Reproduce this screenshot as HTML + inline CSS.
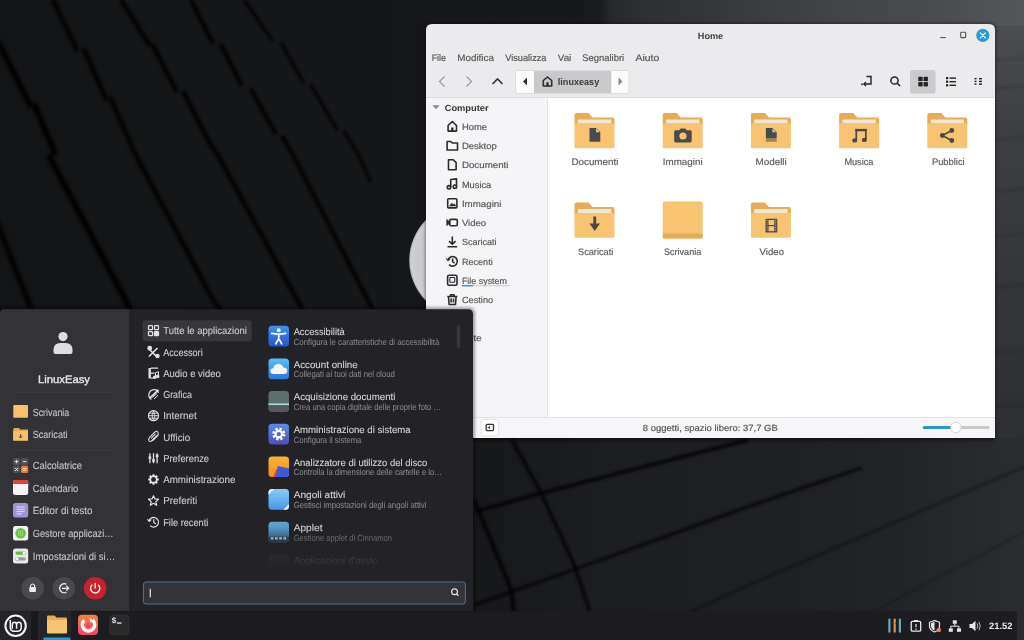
<!DOCTYPE html>
<html><head><meta charset="utf-8"><style>
html,body{margin:0;padding:0;width:1024px;height:640px;overflow:hidden;background:#141416}
svg{display:block;will-change:transform}
text{font-family:"Liberation Sans", sans-serif;text-rendering:geometricPrecision}
</style></head><body>
<svg width="1024" height="640" viewBox="0 0 1024 640">
<defs>
<radialGradient id="bgr" gradientUnits="userSpaceOnUse" cx="1024" cy="0" r="1" gradientTransform="translate(1024 0) scale(460 1000) translate(-1024 0)">
 <stop offset="0" stop-color="#3d3e42"/>
 <stop offset="0.25" stop-color="#36373b"/>
 <stop offset="0.45" stop-color="#303134"/>
 <stop offset="0.6" stop-color="#2a2b2e"/>
 <stop offset="0.73" stop-color="#212225"/>
 <stop offset="0.95" stop-color="#18191b"/>
 <stop offset="1.0" stop-color="#141517" stop-opacity="0"/>
</radialGradient>
<filter id="soft" x="-10%" y="-10%" width="120%" height="120%"><feGaussianBlur stdDeviation="1.8"/></filter>
<linearGradient id="fade" x1="0" y1="0" x2="0" y2="1">
 <stop offset="0" stop-color="#232327" stop-opacity="0"/>
 <stop offset="0.6" stop-color="#232327" stop-opacity="0.8"/>
 <stop offset="1" stop-color="#232327" stop-opacity="1"/>
</linearGradient>
<radialGradient id="disc" cx="0.5" cy="0.5" r="0.5">
 <stop offset="0" stop-color="#d0d1d5"/>
 <stop offset="0.85" stop-color="#c8c9cd"/>
 <stop offset="0.97" stop-color="#cfd0d4"/>
 <stop offset="1" stop-color="#a8a9ad"/>
</radialGradient>
<filter id="shadow2" x="-20%" y="-20%" width="140%" height="140%"><feGaussianBlur stdDeviation="1.5"/></filter>
<filter id="shadow" x="-20%" y="-20%" width="140%" height="140%"><feGaussianBlur stdDeviation="3"/></filter>
</defs>
<defs><linearGradient id="lg0" x1="0" y1="0" x2="1" y2="0"><stop offset="0" stop-color="#131416"/><stop offset="0.6" stop-color="#18191b"/><stop offset="1" stop-color="#1a1b1d"/></linearGradient></defs>
<rect x="0" y="0" width="1024" height="640" fill="url(#lg0)"/>
<rect x="0" y="0" width="1024" height="640" fill="url(#bgr)"/>
<defs><linearGradient id="topg" gradientUnits="userSpaceOnUse" x1="598" y1="0" x2="1024" y2="0"><stop offset="0" stop-color="#1a1a1c"/><stop offset="0.03" stop-color="#27282b"/><stop offset="0.12" stop-color="#2e2f33"/><stop offset="0.34" stop-color="#3a3b3f"/><stop offset="0.55" stop-color="#424347"/><stop offset="0.77" stop-color="#4a4b4f"/><stop offset="1" stop-color="#55565a"/></linearGradient><linearGradient id="rgtg" gradientUnits="userSpaceOnUse" x1="0" y1="0" x2="0" y2="438"><stop offset="0" stop-color="#505156"/><stop offset="0.28" stop-color="#3e3f43"/><stop offset="0.57" stop-color="#37383c"/><stop offset="1" stop-color="#2e2f33"/></linearGradient></defs>
<defs><linearGradient id="botg" gradientUnits="userSpaceOnUse" x1="470" y1="0" x2="1024" y2="0"><stop offset="0" stop-color="#161719"/><stop offset="0.23" stop-color="#1d1e21"/><stop offset="0.6" stop-color="#202124"/><stop offset="0.78" stop-color="#232427"/><stop offset="1" stop-color="#2b2c2f"/></linearGradient></defs>
<rect x="430" y="436" width="594" height="175" fill="url(#botg)"/>
<path d="M604 0 H1024 V30 H590 Z" fill="url(#topg)"/>
<rect x="994" y="26" width="30" height="412" fill="url(#rgtg)"/>
<g fill="none" stroke="#060607" stroke-linecap="butt" filter="url(#soft)"><path d="M53 0 L77.5 51 M83.6 48.5 L106.6 100.5 M110 97 L135.7 155 L213 300 L222 312" stroke-width="4.8" opacity="0.85"/><path d="M-2 42 L31.5 108 M34 104 L55.7 155 M48.5 155 L130.8 310" stroke-width="6" opacity="0.9"/><path d="M-6 215 L31.5 310" stroke-width="6" opacity="0.8"/><path d="M121 0 L150 46 M152.7 44.8 L176.9 92 M183 91 L209.6 143 L217.8 155 L302.7 310" stroke-width="4.8" opacity="0.85"/><path d="M191 0 L213 43.6 M220.3 43.6 L242 86 M250.6 88.4 L276 134.5 M282 135.7 L293 155 L373 310" stroke-width="4.5" opacity="0.85"/><path d="M244.5 0 L272.4 41 M280.8 42.4 L303.9 83.6 M311 84.8 L337.8 130.8 M343.8 130.8 L358.4 155 L370.5 181.7" stroke-width="3.6" opacity="0.8"/><path d="M475.5 511.6 L538.8 493.8 L747.8 440" stroke-width="3.6" opacity="0.85"/><path d="M474 605 L570.4 570.8 L750 506 L862 467.6" stroke-width="3" opacity="0.8"/><path d="M690 612 L750 584.5 L898 521 L1024 467" stroke-width="1.6" opacity="0.55"/><path d="M873 612 L1024 532" stroke-width="1.3" opacity="0.4"/><path d="M511.3 438.7 L540 491 L574.5 565.3 L590 612" stroke-width="3.4" opacity="0.85"/><path d="M474 499.3 L511.3 590 L514 612" stroke-width="4" opacity="0.85"/><path d="M990 61 L1024 58" stroke-width="1.0" opacity="0.3"/><path d="M990 89 L1024 86" stroke-width="1.0" opacity="0.3"/><path d="M990 140 L1024 137" stroke-width="1.0" opacity="0.3"/><path d="M990 192 L1024 189" stroke-width="1.0" opacity="0.3"/><path d="M990 237 L1024 234" stroke-width="1.0" opacity="0.3"/><path d="M990 288 L1024 285" stroke-width="1.0" opacity="0.3"/><path d="M990 353 L1024 350" stroke-width="1.0" opacity="0.3"/><path d="M990 408 L1024 405" stroke-width="1.0" opacity="0.3"/></g>
<circle cx="466.6" cy="260.4" r="57.4" fill="url(#disc)"/>
<rect x="425" y="23" width="571" height="418" rx="6" fill="#000" opacity="0.4" filter="url(#shadow2)"/>
<path d="M426 438 V30 Q426 24 432 24 H989 Q995 24 995 30 V438 Z" fill="#ebebed"/>
<rect x="426" y="97" width="569" height="320" fill="#ffffff"/>
<rect x="426" y="97" width="122" height="320" fill="#f5f5f7"/>
<rect x="547" y="97" width="1" height="320" fill="#e4e4e6"/>
<rect x="426" y="97" width="569" height="1" fill="#dcdcde"/>
<rect x="426" y="417" width="569" height="21" fill="#f6f6f8"/>
<rect x="426" y="417" width="569" height="1" fill="#e2e2e4"/>
<text x="710.5" y="38.9" font-size="9" fill="#3c3c3c" font-weight="bold" text-anchor="middle" textLength="25.4" lengthAdjust="spacingAndGlyphs" >Home</text>
<rect x="940.2" y="37" width="5.6" height="1.1" fill="#555"/>
<rect x="960.7" y="32.3" width="5" height="5.3" fill="none" stroke="#555" stroke-width="1.1" rx="0.6"/>
<circle cx="982.8" cy="35.4" r="6.6" fill="#2a9ad8"/>
<path d="M980.3 32.9 L985.3 37.9 M985.3 32.9 L980.3 37.9" stroke="#e8f6ff" stroke-width="1.3" stroke-linecap="round"/>
<text x="431.7" y="60.7" font-size="9.5" fill="#575757" font-weight="normal" text-anchor="start" textLength="14.3" lengthAdjust="spacingAndGlyphs"  stroke="#575757" stroke-width="0.18">File</text>
<text x="457.3" y="60.7" font-size="9.5" fill="#575757" font-weight="normal" text-anchor="start" textLength="36.6" lengthAdjust="spacingAndGlyphs"  stroke="#575757" stroke-width="0.18">Modifica</text>
<text x="505.3" y="60.7" font-size="9.5" fill="#575757" font-weight="normal" text-anchor="start" textLength="41.1" lengthAdjust="spacingAndGlyphs"  stroke="#575757" stroke-width="0.18">Visualizza</text>
<text x="557.8" y="60.7" font-size="9.5" fill="#575757" font-weight="normal" text-anchor="start" textLength="13.5" lengthAdjust="spacingAndGlyphs"  stroke="#575757" stroke-width="0.18">Vai</text>
<text x="582.2" y="60.7" font-size="9.5" fill="#575757" font-weight="normal" text-anchor="start" textLength="42.0" lengthAdjust="spacingAndGlyphs"  stroke="#575757" stroke-width="0.18">Segnalibri</text>
<text x="635.5" y="60.7" font-size="9.5" fill="#575757" font-weight="normal" text-anchor="start" textLength="23.7" lengthAdjust="spacingAndGlyphs"  stroke="#575757" stroke-width="0.18">Aiuto</text>
<path d="M444.5 76.5 L439.5 81.5 L444.5 86.5" fill="none" stroke="#9a9a9a" stroke-width="1.2"/>
<path d="M466.5 76.5 L471.5 81.5 L466.5 86.5" fill="none" stroke="#9a9a9a" stroke-width="1.2"/>
<path d="M492.5 84 L497.5 79 L502.5 84" fill="none" stroke="#333" stroke-width="1.6"/>
<rect x="515.5" y="70.5" width="113.5" height="23" rx="2" fill="#fbfbfb" stroke="#dcdcde"/>
<rect x="534" y="71" width="77.3" height="22" fill="#c9c9cb"/>
<path d="M527 77.5 L523 81.5 L527 85.5 Z" fill="#2e2e2e"/>
<path d="M618.5 77.5 L622.5 81.5 L618.5 85.5 Z" fill="#8a8a8a"/>
<path d="M543.3 86 V80.5 L547.5 77 L551.7 80.5 V86 Z" fill="none" stroke="#2e2e2e" stroke-width="1.6" stroke-linejoin="round"/><rect x="546.3" y="82.3" width="2.4" height="4" fill="#2e2e2e"/>
<text x="557.8" y="85.2" font-size="9.5" fill="#3a3a3a" font-weight="bold" text-anchor="start" textLength="41.4" lengthAdjust="spacingAndGlyphs" >linuxeasy</text>
<rect x="910" y="70" width="25.6" height="23.6" rx="2.5" fill="#cbcbcd"/>
<rect x="918.3" y="76.8" width="4.3" height="4.3" fill="#222"/>
<rect x="918.3" y="82.1" width="4.3" height="4.3" fill="#222"/>
<rect x="923.5999999999999" y="76.8" width="4.3" height="4.3" fill="#222"/>
<rect x="923.5999999999999" y="82.1" width="4.3" height="4.3" fill="#222"/>
<rect x="946" y="77.0" width="2.2" height="2.2" fill="#222"/>
<rect x="949.5" y="77.4" width="6.5" height="1.4" fill="#222"/>
<rect x="946" y="80.6" width="2.2" height="2.2" fill="#222"/>
<rect x="949.5" y="81.0" width="6.5" height="1.4" fill="#222"/>
<rect x="946" y="84.2" width="2.2" height="2.2" fill="#222"/>
<rect x="949.5" y="84.60000000000001" width="6.5" height="1.4" fill="#222"/>
<rect x="974.5" y="78.0" width="2" height="1.4" fill="#222"/>
<rect x="979" y="78.0" width="3" height="1.4" fill="#222"/>
<rect x="974.5" y="80.7" width="2" height="1.4" fill="#222"/>
<rect x="979" y="80.7" width="3" height="1.4" fill="#222"/>
<rect x="974.5" y="83.4" width="2" height="1.4" fill="#222"/>
<rect x="979" y="83.4" width="3" height="1.4" fill="#222"/>
<circle cx="894.5" cy="80.5" r="3.6" fill="none" stroke="#222" stroke-width="1.5"/>
<path d="M897.2 83.2 L900 86" stroke="#222" stroke-width="1.6"/>
<path d="M866.5 76.5 H871 V84 H864" fill="none" stroke="#222" stroke-width="1.4"/>
<path d="M866 82 L863.8 84 L866 86" fill="none" stroke="#222" stroke-width="1.2"/>
<rect x="861.2" y="83.5" width="1.6" height="1.6" fill="#222"/>
<path d="M432.2 105.3 H439.7 L436 109.3 Z" fill="#8a8a8a"/>
<text x="444.7" y="110.7" font-size="9" fill="#333" font-weight="bold" text-anchor="start" textLength="43.8" lengthAdjust="spacingAndGlyphs" >Computer</text>
<text x="461.9" y="129.9" font-size="9" fill="#585858" font-weight="normal" text-anchor="start" textLength="25.1" lengthAdjust="spacingAndGlyphs"  stroke="#585858" stroke-width="0.18">Home</text>
<g transform="translate(452.3,126.3)" fill="none" stroke="#2b2b2b" stroke-width="1.6" stroke-linejoin="round"><path d="M-4.2 4.8 V-0.8 L0 -4.8 L4.2 -0.8 V4.8 Z"/><rect x="-1.2" y="1.2" width="2.4" height="3.8" fill="#2b2b2b" stroke="none"/></g>
<text x="461.9" y="149.15" font-size="9" fill="#585858" font-weight="normal" text-anchor="start" textLength="35.0" lengthAdjust="spacingAndGlyphs"  stroke="#585858" stroke-width="0.18">Desktop</text>
<g transform="translate(452.3,145.55)" fill="none" stroke="#2b2b2b" stroke-width="1.6" stroke-linejoin="round"><path d="M-5.2 -4 H-1.5 L0 -2.5 H5.2 V4.5 H-5.2 Z"/></g>
<text x="461.9" y="168.4" font-size="9" fill="#585858" font-weight="normal" text-anchor="start" textLength="46.6" lengthAdjust="spacingAndGlyphs"  stroke="#585858" stroke-width="0.18">Documenti</text>
<g transform="translate(452.3,164.8)" fill="none" stroke="#2b2b2b" stroke-width="1.6" stroke-linejoin="round"><path d="M-3.8 -5 H1 L3.8 -2.2 V5 H-3.8 Z"/></g>
<text x="461.9" y="187.65" font-size="9" fill="#585858" font-weight="normal" text-anchor="start" textLength="29.4" lengthAdjust="spacingAndGlyphs"  stroke="#585858" stroke-width="0.18">Musica</text>
<g transform="translate(452.3,184.05)" fill="none" stroke="#2b2b2b" stroke-width="1.6" stroke-linejoin="round"><path d="M-1.6 3.2 V-4.5 L4.2 -5.2 V2.5"/><circle cx="-3.3" cy="3.3" r="1.7"/><circle cx="2.6" cy="2.6" r="1.7"/></g>
<text x="461.9" y="206.9" font-size="9" fill="#585858" font-weight="normal" text-anchor="start" textLength="39.5" lengthAdjust="spacingAndGlyphs"  stroke="#585858" stroke-width="0.18">Immagini</text>
<g transform="translate(452.3,203.3)" fill="none" stroke="#2b2b2b" stroke-width="1.6" stroke-linejoin="round"><rect x="-4.6" y="-4.6" width="9.2" height="9.2" rx="1"/><path d="M-3 3 L-0.5 0 L1 1.5 L2 0.5 L3.5 3" fill="#2b2b2b" stroke-width="0.8"/></g>
<text x="461.9" y="226.15" font-size="9" fill="#585858" font-weight="normal" text-anchor="start" textLength="24.3" lengthAdjust="spacingAndGlyphs"  stroke="#585858" stroke-width="0.18">Video</text>
<g transform="translate(452.3,222.55)" fill="none" stroke="#2b2b2b" stroke-width="1.6" stroke-linejoin="round"><rect x="-2.5" y="-3.2" width="7.5" height="6.4" rx="1.2"/><path d="M-5.5 -3 V3 L-2.5 0.5 V-0.5 Z" fill="#2b2b2b" stroke-width="0.8"/></g>
<text x="461.9" y="245.4" font-size="9" fill="#585858" font-weight="normal" text-anchor="start" textLength="34.6" lengthAdjust="spacingAndGlyphs"  stroke="#585858" stroke-width="0.18">Scaricati</text>
<g transform="translate(452.3,241.8)" fill="none" stroke="#2b2b2b" stroke-width="1.6" stroke-linejoin="round"><path d="M0 -5.2 V2.5 M-3.3 -0.7 L0 2.5 L3.3 -0.7 M-4.8 5 H4.8"/></g>
<text x="461.9" y="264.65" font-size="9" fill="#585858" font-weight="normal" text-anchor="start" textLength="30.8" lengthAdjust="spacingAndGlyphs"  stroke="#585858" stroke-width="0.18">Recenti</text>
<g transform="translate(452.3,261.05)" fill="none" stroke="#2b2b2b" stroke-width="1.6" stroke-linejoin="round"><path d="M-4.4 -1 A4.8 4.8 0 1 1 -3.3 3.6"/><path d="M-6 -2.8 L-4.4 -0.5 L-2.2 -2.3" stroke-width="1.1"/><path d="M0.3 -2.6 V0.6 L2.3 2"/></g>
<text x="461.9" y="283.9" font-size="9" fill="#585858" font-weight="normal" text-anchor="start" textLength="45.1" lengthAdjust="spacingAndGlyphs"  stroke="#585858" stroke-width="0.18">File system</text>
<g transform="translate(452.3,280.3)" fill="none" stroke="#2b2b2b" stroke-width="1.6" stroke-linejoin="round"><rect x="-4.7" y="-5" width="9.4" height="10" rx="1.5"/><rect x="-2.5" y="-2.8" width="5" height="4.8" rx="0.8" stroke-width="1.1"/></g>
<text x="461.9" y="303.15" font-size="9" fill="#585858" font-weight="normal" text-anchor="start" textLength="31.3" lengthAdjust="spacingAndGlyphs"  stroke="#585858" stroke-width="0.18">Cestino</text>
<g transform="translate(452.3,299.55)" fill="none" stroke="#2b2b2b" stroke-width="1.6" stroke-linejoin="round"><path d="M-5 -3 H5 M-1.8 -3 V-4.8 H1.8 V-3 M-3.8 -3 L-3.2 5 H3.2 L3.8 -3 M-1.2 -1 V3 M1.2 -1 V3"/></g>
<text x="473.5" y="341.3" font-size="9" fill="#555555" font-weight="normal" text-anchor="start" textLength="8" lengthAdjust="spacingAndGlyphs"  stroke="#555555" stroke-width="0.18">te</text>
<rect x="461.9" y="285.3" width="48" height="0.9" fill="#c8c8ca"/>
<rect x="461.9" y="285.0" width="11" height="1.4" fill="#2a9ad8"/>
<g transform="translate(574.5,113)"><path d="M0 2 Q0 0 2 0 H14 L18 4.5 H38 Q40 4.5 40 6.5 V12 H0 Z" fill="#e8ac55"/><rect x="3.3" y="6.5" width="33.4" height="4" fill="#f2e7d5"/><path d="M0 10.5 H40 V34 Q40 35.3 38.7 35.3 H1.3 Q0 35.3 0 34 Z" fill="#f8c471"/><path d="M15 15 H21.5 L25.8 19.3 V28.7 H15 Z" fill="#4a4a4a"/><path d="M21.5 15.6 L25.2 19.3 H21.5 Z" fill="#e8e0d0" opacity="0.85"/></g>
<text x="571.4" y="164.7" font-size="9.4" fill="#5e5e5e" font-weight="normal" text-anchor="start" textLength="47.0" lengthAdjust="spacingAndGlyphs"  stroke="#5e5e5e" stroke-width="0.18">Documenti</text>
<g transform="translate(662.7,113)"><path d="M0 2 Q0 0 2 0 H14 L18 4.5 H38 Q40 4.5 40 6.5 V12 H0 Z" fill="#e8ac55"/><rect x="3.3" y="6.5" width="33.4" height="4" fill="#f2e7d5"/><path d="M0 10.5 H40 V34 Q40 35.3 38.7 35.3 H1.3 Q0 35.3 0 34 Z" fill="#f8c471"/><path d="M11.5 18.8 Q11.5 17.3 13 17.3 H16.5 L18 15.5 H22.5 L24 17.3 H27.5 Q29 17.3 29 18.8 V28 Q29 29.4 27.5 29.4 H13 Q11.5 29.4 11.5 28 Z" fill="#4a4a4a"/><circle cx="20.25" cy="23" r="3.6" fill="#f8c471"/></g>
<text x="662.8" y="164.7" font-size="9.4" fill="#5e5e5e" font-weight="normal" text-anchor="start" textLength="39.8" lengthAdjust="spacingAndGlyphs"  stroke="#5e5e5e" stroke-width="0.18">Immagini</text>
<g transform="translate(750.9,113)"><path d="M0 2 Q0 0 2 0 H14 L18 4.5 H38 Q40 4.5 40 6.5 V12 H0 Z" fill="#e8ac55"/><rect x="3.3" y="6.5" width="33.4" height="4" fill="#f2e7d5"/><path d="M0 10.5 H40 V34 Q40 35.3 38.7 35.3 H1.3 Q0 35.3 0 34 Z" fill="#f8c471"/><path d="M15 15 H21.5 L25.8 19.3 V25 H15 Z" fill="#4a4a4a"/><path d="M21.5 15.6 L25.2 19.3 H21.5 Z" fill="#e8e0d0" opacity="0.85"/><rect x="15" y="25" width="10.8" height="3.7" fill="#4a4a4a" opacity="0.55"/></g>
<text x="755.5" y="164.7" font-size="9.4" fill="#5e5e5e" font-weight="normal" text-anchor="start" textLength="31.2" lengthAdjust="spacingAndGlyphs"  stroke="#5e5e5e" stroke-width="0.18">Modelli</text>
<g transform="translate(839.1,113)"><path d="M0 2 Q0 0 2 0 H14 L18 4.5 H38 Q40 4.5 40 6.5 V12 H0 Z" fill="#e8ac55"/><rect x="3.3" y="6.5" width="33.4" height="4" fill="#f2e7d5"/><path d="M0 10.5 H40 V34 Q40 35.3 38.7 35.3 H1.3 Q0 35.3 0 34 Z" fill="#f8c471"/><rect x="16.3" y="15.9" width="11.3" height="2.4" fill="#4a4a4a"/><rect x="16.3" y="15.9" width="1.7" height="11.5" fill="#4a4a4a"/><rect x="25.9" y="15.9" width="1.7" height="11" fill="#4a4a4a"/><ellipse cx="15.6" cy="27.4" rx="2.5" ry="2.2" fill="#4a4a4a"/><ellipse cx="25.2" cy="26.9" rx="2.5" ry="2.2" fill="#4a4a4a"/></g>
<text x="844.4" y="164.7" font-size="9.4" fill="#5e5e5e" font-weight="normal" text-anchor="start" textLength="29.0" lengthAdjust="spacingAndGlyphs"  stroke="#5e5e5e" stroke-width="0.18">Musica</text>
<g transform="translate(927.3,113)"><path d="M0 2 Q0 0 2 0 H14 L18 4.5 H38 Q40 4.5 40 6.5 V12 H0 Z" fill="#e8ac55"/><rect x="3.3" y="6.5" width="33.4" height="4" fill="#f2e7d5"/><path d="M0 10.5 H40 V34 Q40 35.3 38.7 35.3 H1.3 Q0 35.3 0 34 Z" fill="#f8c471"/><circle cx="15" cy="22.5" r="2.4" fill="#4a4a4a"/><circle cx="24.5" cy="17.5" r="2.4" fill="#4a4a4a"/><circle cx="24.5" cy="27.5" r="2.4" fill="#4a4a4a"/><path d="M15 22.5 L24.5 17.5 M15 22.5 L24.5 27.5" stroke="#4a4a4a" stroke-width="1.5"/></g>
<text x="931.9" y="164.7" font-size="9.4" fill="#5e5e5e" font-weight="normal" text-anchor="start" textLength="32.8" lengthAdjust="spacingAndGlyphs"  stroke="#5e5e5e" stroke-width="0.18">Pubblici</text>
<g transform="translate(574.5,202.5)"><path d="M0 2 Q0 0 2 0 H14 L18 4.5 H38 Q40 4.5 40 6.5 V12 H0 Z" fill="#e8ac55"/><rect x="3.3" y="6.5" width="33.4" height="4" fill="#f2e7d5"/><path d="M0 10.5 H40 V34 Q40 35.3 38.7 35.3 H1.3 Q0 35.3 0 34 Z" fill="#f8c471"/><path d="M18.8 14 H21.7 V21 H25.5 L20.25 28.6 L15 21 H18.8 Z" fill="#4a4a4a"/></g>
<text x="578" y="254.7" font-size="9.4" fill="#5e5e5e" font-weight="normal" text-anchor="start" textLength="35.3" lengthAdjust="spacingAndGlyphs"  stroke="#5e5e5e" stroke-width="0.18">Scaricati</text>
<g transform="translate(662.7,201.5)"><rect x="0" y="0" width="40" height="37" rx="1.5" fill="#f8c471"/><rect x="0" y="32" width="40" height="5" rx="1.5" fill="#e8ac55"/></g>
<text x="664" y="254.7" font-size="9.4" fill="#5e5e5e" font-weight="normal" text-anchor="start" textLength="37.2" lengthAdjust="spacingAndGlyphs"  stroke="#5e5e5e" stroke-width="0.18">Scrivania</text>
<g transform="translate(750.9,202.5)"><path d="M0 2 Q0 0 2 0 H14 L18 4.5 H38 Q40 4.5 40 6.5 V12 H0 Z" fill="#e8ac55"/><rect x="3.3" y="6.5" width="33.4" height="4" fill="#f2e7d5"/><path d="M0 10.5 H40 V34 Q40 35.3 38.7 35.3 H1.3 Q0 35.3 0 34 Z" fill="#f8c471"/><rect x="14.6" y="16.2" width="11.8" height="13.8" rx="0.8" fill="#4a4a4a"/><rect x="17.6" y="17.5" width="5.8" height="5" fill="#f8c471"/><rect x="17.6" y="23.7" width="5.8" height="5" fill="#f8c471"/><rect x="15.7" y="17.3" width="1.1" height="1.1" fill="#f8c471" opacity="0.8"/><rect x="15.7" y="19.7" width="1.1" height="1.1" fill="#f8c471" opacity="0.8"/><rect x="15.7" y="22.1" width="1.1" height="1.1" fill="#f8c471" opacity="0.8"/><rect x="15.7" y="24.5" width="1.1" height="1.1" fill="#f8c471" opacity="0.8"/><rect x="15.7" y="26.9" width="1.1" height="1.1" fill="#f8c471" opacity="0.8"/><rect x="24.2" y="17.3" width="1.1" height="1.1" fill="#f8c471" opacity="0.8"/><rect x="24.2" y="19.7" width="1.1" height="1.1" fill="#f8c471" opacity="0.8"/><rect x="24.2" y="22.1" width="1.1" height="1.1" fill="#f8c471" opacity="0.8"/><rect x="24.2" y="24.5" width="1.1" height="1.1" fill="#f8c471" opacity="0.8"/><rect x="24.2" y="26.9" width="1.1" height="1.1" fill="#f8c471" opacity="0.8"/></g>
<text x="759.6" y="254.7" font-size="9.4" fill="#5e5e5e" font-weight="normal" text-anchor="start" textLength="24.4" lengthAdjust="spacingAndGlyphs"  stroke="#5e5e5e" stroke-width="0.18">Video</text>
<rect x="481.2" y="419.5" width="17.4" height="16.4" rx="2.5" fill="#fdfdfd" stroke="#e0e0e2" stroke-width="0.8"/>
<rect x="486.2" y="424.3" width="7.3" height="6.3" rx="1" fill="none" stroke="#333" stroke-width="1.3"/>
<path d="M487.8 427.5 L489.8 425.8 V429.2 Z" fill="#333"/>
<text x="642.8" y="431" font-size="9" fill="#555555" font-weight="normal" text-anchor="start" textLength="135" lengthAdjust="spacingAndGlyphs"  stroke="#555555" stroke-width="0.18">8 oggetti, spazio libero: 37,7 GB</text>
<rect x="922.8" y="426" width="66.6" height="3" rx="1.5" fill="#c8c8ca"/>
<rect x="922.8" y="426" width="33" height="3" rx="1.5" fill="#2a94cf"/>
<circle cx="955.8" cy="427.5" r="5.3" fill="#ffffff" stroke="#c6c6c8" stroke-width="0.8"/>
<rect x="-10" y="307.3" width="485" height="311.7" rx="6" fill="#000" opacity="0.35" filter="url(#shadow2)"/>
<path d="M0 611 V313.3 Q0 309.3 4 309.3 H468 Q473 309.3 473 314.3 V611 Z" fill="#232327"/>
<path d="M0 611 V313.3 Q0 309.3 4 309.3 H129 V611 Z" fill="#323237"/>
<circle cx="63" cy="336.6" r="4.6" fill="#dedede"/>
<path d="M53.5 350 Q53.5 343 60.5 343 H65.5 Q72.5 343 72.5 350 V352 Q72.5 354 70.5 354 H55.5 Q53.5 354 53.5 352 Z" fill="#dedede"/>
<text x="38" y="383.1" font-size="10.8" fill="#e6e6e6" font-weight="normal" text-anchor="start" textLength="51.9" lengthAdjust="spacingAndGlyphs" stroke="#e6e6e6" stroke-width="0.35">LinuxEasy</text>
<rect x="16" y="392.3" width="96" height="0.8" fill="#3e3e44"/>
<rect x="16" y="449.6" width="96" height="0.8" fill="#3e3e44"/>
<rect x="13.3" y="405" width="14.7" height="12.8" rx="1" fill="#f6c06c"/>
<g transform="translate(13.3,428)"><path d="M0 1 Q0 0 1 0 H5.5 L7 1.6 H14.7 V12.6 H0 Z" fill="#e3a954"/><rect x="0" y="3" width="14.7" height="9.6" fill="#f6c06c"/><path d="M7.35 6 V9.5 M5.8 8.3 L7.35 10 L8.9 8.3" stroke="#3a3a3a" stroke-width="0.9" fill="none"/></g>
<text x="32.75" y="415.6" font-size="10.4" fill="#c6c6ca" font-weight="normal" text-anchor="start" textLength="36.5" lengthAdjust="spacingAndGlyphs"  stroke="#c6c6ca" stroke-width="0.1">Scrivania</text>
<text x="32.75" y="438.1" font-size="10.4" fill="#c6c6ca" font-weight="normal" text-anchor="start" textLength="34.7" lengthAdjust="spacingAndGlyphs"  stroke="#c6c6ca" stroke-width="0.1">Scaricati</text>
<text x="32.75" y="468.75" font-size="10.4" fill="#c6c6ca" font-weight="normal" text-anchor="start" textLength="49.2" lengthAdjust="spacingAndGlyphs"  stroke="#c6c6ca" stroke-width="0.1">Calcolatrice</text>
<text x="32.75" y="491.6" font-size="10.4" fill="#c6c6ca" font-weight="normal" text-anchor="start" textLength="45.5" lengthAdjust="spacingAndGlyphs"  stroke="#c6c6ca" stroke-width="0.1">Calendario</text>
<text x="32.75" y="513.75" font-size="10.4" fill="#c6c6ca" font-weight="normal" text-anchor="start" textLength="59.7" lengthAdjust="spacingAndGlyphs"  stroke="#c6c6ca" stroke-width="0.1">Editor di testo</text>
<text x="32.75" y="536.6" font-size="10.4" fill="#c6c6ca" font-weight="normal" text-anchor="start" textLength="80.7" lengthAdjust="spacingAndGlyphs"  stroke="#c6c6ca" stroke-width="0.1">Gestore applicazi…</text>
<text x="32.75" y="559.7" font-size="10.4" fill="#c6c6ca" font-weight="normal" text-anchor="start" textLength="82.5" lengthAdjust="spacingAndGlyphs"  stroke="#c6c6ca" stroke-width="0.1">Impostazioni di si…</text>
<g transform="translate(13,458)"><rect x="0" y="0" width="7.2" height="7.2" rx="1.5" fill="#505055"/><rect x="8" y="0" width="7.2" height="7.2" rx="1.5" fill="#505055"/><rect x="0" y="7.8" width="7.2" height="7.2" rx="1.5" fill="#505055"/><rect x="8" y="7.8" width="7.2" height="7.2" rx="1.5" fill="#ee7a2e"/><path d="M1.8 3.6 H5.4 M3.6 1.8 V5.4 M9.8 3.6 H13.4 M2 9.8 L5.2 13 M5.2 9.8 L2 13 M9.8 10.6 H13.4 M9.8 12.2 H13.4" stroke="#eee" stroke-width="0.9"/></g>
<g transform="translate(13,480)"><rect x="0" y="0" width="15.2" height="15" rx="2.5" fill="#f5f5f5"/><path d="M0 2.5 Q0 0 2.5 0 H12.7 Q15.2 0 15.2 2.5 V4 H0 Z" fill="#e0453a"/></g>
<g transform="translate(13,503)"><rect x="0" y="0" width="15.2" height="14.5" rx="2.5" fill="#9d94d8"/><path d="M3.5 4 H11.7 M3.5 6.3 H11.7 M3.5 8.6 H11.7 M3.5 10.9 H9" stroke="#e8e6f8" stroke-width="0.9"/></g>
<g transform="translate(13,526)"><rect x="0" y="0" width="15.2" height="14.5" rx="2.5" fill="#f2f2f2"/><circle cx="7.6" cy="7.25" r="5.3" fill="#6cbf4a"/><g fill="#d8f0c8"><rect x="5.2" y="4.8" width="0.9" height="0.9"/><rect x="5.2" y="6.699999999999999" width="0.9" height="0.9"/><rect x="5.2" y="8.6" width="0.9" height="0.9"/><rect x="7.1" y="4.8" width="0.9" height="0.9"/><rect x="7.1" y="6.699999999999999" width="0.9" height="0.9"/><rect x="7.1" y="8.6" width="0.9" height="0.9"/><rect x="9.0" y="4.8" width="0.9" height="0.9"/><rect x="9.0" y="6.699999999999999" width="0.9" height="0.9"/><rect x="9.0" y="8.6" width="0.9" height="0.9"/></g></g>
<g transform="translate(13,548.5)"><rect x="0" y="0" width="15.2" height="15" rx="2.5" fill="#e8e8e8"/><rect x="2.5" y="3" width="10.2" height="3.3" rx="1.6" fill="#68b848"/><rect x="2.5" y="8.7" width="10.2" height="3.3" rx="1.6" fill="#9a9a9a"/><circle cx="11" cy="4.65" r="1.3" fill="#fff"/><circle cx="4.2" cy="10.35" r="1.3" fill="#fff"/></g>
<circle cx="32.6" cy="588.3" r="11.3" fill="#48484d"/>
<circle cx="63.8" cy="588.3" r="11.3" fill="#48484d"/>
<circle cx="95.2" cy="588.3" r="11.3" fill="#c8222b"/>
<rect x="29.3" y="587" width="6.6" height="5" rx="0.8" fill="#eee"/><path d="M30.6 587 V585.3 Q32.6 582.6 34.6 585.3 V587" fill="none" stroke="#eee" stroke-width="1.1"/>
<path d="M66.5 584.3 A4.6 4.6 0 1 0 66.5 592.3" fill="none" stroke="#eee" stroke-width="1.3"/><path d="M62 588.3 H68.5 M66.3 586 L68.6 588.3 L66.3 590.6" fill="none" stroke="#eee" stroke-width="1.3"/>
<path d="M92.3 584.8 A4.6 4.6 0 1 0 98.1 584.8" fill="none" stroke="#f5f5f5" stroke-width="1.4"/><path d="M95.2 583 V588.5" stroke="#f5f5f5" stroke-width="1.4"/>
<rect x="142.6" y="320.2" width="109.1" height="21" rx="3" fill="#38383c"/>
<text x="163.2" y="334.3" font-size="10.2" fill="#cdcdd0" font-weight="normal" text-anchor="start" textLength="83.7" lengthAdjust="spacingAndGlyphs"  stroke="#cdcdd0" stroke-width="0.1">Tutte le applicazioni</text>
<g transform="translate(153.5,330.7)" fill="none" stroke="#e2e2e4" stroke-width="1.2" stroke-linejoin="round"><rect x="-5" y="-5" width="4" height="4" rx="0.6"/><rect x="1" y="-5" width="4" height="4" rx="0.6"/><rect x="-5" y="1" width="4" height="4" rx="0.6"/><rect x="1" y="1" width="4" height="4" rx="0.6" fill="#e2e2e4"/></g>
<text x="163.2" y="355.55" font-size="10.2" fill="#cdcdd0" font-weight="normal" text-anchor="start" textLength="39.5" lengthAdjust="spacingAndGlyphs"  stroke="#cdcdd0" stroke-width="0.1">Accessori</text>
<g transform="translate(153.5,351.95)" fill="none" stroke="#e2e2e4" stroke-width="1.2" stroke-linejoin="round"><path d="M-4.5 4.5 L4 -4 M-5 -3.5 L3.5 5 " stroke-width="1.6"/><circle cx="-3.8" cy="-3.8" r="1.8" fill="#e2e2e4"/><circle cx="4" cy="4" r="1.6" fill="#e2e2e4"/></g>
<text x="163.2" y="376.8" font-size="10.2" fill="#cdcdd0" font-weight="normal" text-anchor="start" textLength="57.6" lengthAdjust="spacingAndGlyphs"  stroke="#cdcdd0" stroke-width="0.1">Audio e video</text>
<g transform="translate(153.5,373.2)" fill="none" stroke="#e2e2e4" stroke-width="1.2" stroke-linejoin="round"><rect x="-5" y="-5.2" width="2.4" height="10.4" fill="#e2e2e4" stroke="none"/><path d="M-2.6 -5 H4.5 M-2.6 0 H1 M-2.6 5 H0"/><path d="M2 4 V-0.5 L5 -1.5 V3" stroke-width="1"/><circle cx="1.2" cy="4" r="1.2" fill="#e2e2e4"/><circle cx="4.2" cy="3.2" r="1.2" fill="#e2e2e4"/></g>
<text x="163.2" y="398.05" font-size="10.2" fill="#cdcdd0" font-weight="normal" text-anchor="start" textLength="28.8" lengthAdjust="spacingAndGlyphs"  stroke="#cdcdd0" stroke-width="0.1">Grafica</text>
<g transform="translate(153.5,394.45)" fill="none" stroke="#e2e2e4" stroke-width="1.2" stroke-linejoin="round"><path d="M-2 5 Q-5.5 3 -4.5 -1 Q-3 -5 1.5 -4.8 Q5 -4.3 4.8 -1.5"/><path d="M-4 4 L5 -4.5" stroke-width="1.8"/><path d="M-1 3 L3.5 -1 M0.5 4.5 L4.6 0.8" stroke-width="1"/></g>
<text x="163.2" y="419.3" font-size="10.2" fill="#cdcdd0" font-weight="normal" text-anchor="start" textLength="33.5" lengthAdjust="spacingAndGlyphs"  stroke="#cdcdd0" stroke-width="0.1">Internet</text>
<g transform="translate(153.5,415.7)" fill="none" stroke="#e2e2e4" stroke-width="1.2" stroke-linejoin="round"><circle cx="0" cy="0" r="5"/><path d="M-5 0 H5 M0 -5 Q-3 0 0 5 Q3 0 0 -5 M-4.3 -2.5 H4.3 M-4.3 2.5 H4.3" stroke-width="0.9"/></g>
<text x="163.2" y="440.55" font-size="10.2" fill="#cdcdd0" font-weight="normal" text-anchor="start" textLength="27.0" lengthAdjust="spacingAndGlyphs"  stroke="#cdcdd0" stroke-width="0.1">Ufficio</text>
<g transform="translate(153.5,436.95)" fill="none" stroke="#e2e2e4" stroke-width="1.2" stroke-linejoin="round"><path d="M3.5 -1.5 L-1.5 3.5 Q-3.5 5.5 -4.5 3.8 Q-5.5 2 -3.5 0 L1.5 -5 Q3.5 -6.5 4.5 -4.5 Q5.5 -2.5 3.5 -0.5 L-1 4 M2 -3 L-2.5 1.5" stroke-width="1.1"/></g>
<text x="163.2" y="461.8" font-size="10.2" fill="#cdcdd0" font-weight="normal" text-anchor="start" textLength="45.9" lengthAdjust="spacingAndGlyphs"  stroke="#cdcdd0" stroke-width="0.1">Preferenze</text>
<g transform="translate(153.5,458.2)" fill="none" stroke="#e2e2e4" stroke-width="1.2" stroke-linejoin="round"><path d="M-3.6 -5 V5 M0 -5 V5 M3.6 -5 V5" stroke-width="1.3"/><rect x="-4.9" y="-1.8" width="2.6" height="2.6" fill="#e2e2e4" stroke="none"/><rect x="-1.3" y="1" width="2.6" height="2.6" fill="#e2e2e4" stroke="none"/><rect x="2.3" y="-3.6" width="2.6" height="2.6" fill="#e2e2e4" stroke="none"/></g>
<text x="163.2" y="483.05" font-size="10.2" fill="#cdcdd0" font-weight="normal" text-anchor="start" textLength="72.2" lengthAdjust="spacingAndGlyphs"  stroke="#cdcdd0" stroke-width="0.1">Amministrazione</text>
<g transform="translate(153.5,479.45)" fill="none" stroke="#e2e2e4" stroke-width="1.2" stroke-linejoin="round"><circle cx="0" cy="0" r="3.3" stroke-width="1.8"/><path d="M0 -5.3 V-3.5 M0 3.5 V5.3 M-5.3 0 H-3.5 M3.5 0 H5.3 M-3.75 -3.75 L-2.5 -2.5 M2.5 2.5 L3.75 3.75 M-3.75 3.75 L-2.5 2.5 M2.5 -2.5 L3.75 -3.75" stroke-width="2"/></g>
<text x="163.2" y="504.3" font-size="10.2" fill="#cdcdd0" font-weight="normal" text-anchor="start" textLength="33.9" lengthAdjust="spacingAndGlyphs"  stroke="#cdcdd0" stroke-width="0.1">Preferiti</text>
<g transform="translate(153.5,500.7)" fill="none" stroke="#e2e2e4" stroke-width="1.2" stroke-linejoin="round"><path d="M0 -5 L1.5 -1.7 L5 -1.5 L2.3 0.9 L3.2 4.6 L0 2.6 L-3.2 4.6 L-2.3 0.9 L-5 -1.5 L-1.5 -1.7 Z"/></g>
<text x="163.2" y="525.55" font-size="10.2" fill="#cdcdd0" font-weight="normal" text-anchor="start" textLength="45.2" lengthAdjust="spacingAndGlyphs"  stroke="#cdcdd0" stroke-width="0.1">File recenti</text>
<g transform="translate(153.5,521.95)" fill="none" stroke="#e2e2e4" stroke-width="1.2" stroke-linejoin="round"><path d="M-4.4 -1 A4.8 4.8 0 1 1 -3.3 3.6"/><path d="M-6 -2.8 L-4.4 -0.5 L-2.2 -2.3" stroke-width="1.1"/><path d="M0.3 -2.6 V0.6 L2.3 2"/></g>
<text x="293.7" y="335.0" font-size="9.8" fill="#d4d4d6" font-weight="normal" text-anchor="start" textLength="51.0" lengthAdjust="spacingAndGlyphs"  stroke="#d4d4d6" stroke-width="0.1">Accessibilità</text>
<text x="293.7" y="344.7" font-size="8.8" fill="#88888c" font-weight="normal" text-anchor="start" textLength="145.7" lengthAdjust="spacingAndGlyphs"  stroke="#88888c" stroke-width="0.05">Configura le caratteristiche di accessibilità</text>
<text x="293.7" y="367.65" font-size="9.8" fill="#d4d4d6" font-weight="normal" text-anchor="start" textLength="64.0" lengthAdjust="spacingAndGlyphs"  stroke="#d4d4d6" stroke-width="0.1">Account online</text>
<text x="293.7" y="377.35" font-size="8.8" fill="#88888c" font-weight="normal" text-anchor="start" textLength="101.1" lengthAdjust="spacingAndGlyphs"  stroke="#88888c" stroke-width="0.05">Collegati ai tuoi dati nel cloud</text>
<text x="293.7" y="400.3" font-size="9.8" fill="#d4d4d6" font-weight="normal" text-anchor="start" textLength="101.7" lengthAdjust="spacingAndGlyphs"  stroke="#d4d4d6" stroke-width="0.1">Acquisizione documenti</text>
<text x="293.7" y="410.0" font-size="8.8" fill="#88888c" font-weight="normal" text-anchor="start" textLength="147.5" lengthAdjust="spacingAndGlyphs"  stroke="#88888c" stroke-width="0.05">Crea una copia digitale delle proprie foto …</text>
<text x="293.7" y="432.95" font-size="9.8" fill="#d4d4d6" font-weight="normal" text-anchor="start" textLength="116.9" lengthAdjust="spacingAndGlyphs"  stroke="#d4d4d6" stroke-width="0.1">Amministrazione di sistema</text>
<text x="293.7" y="442.65" font-size="8.8" fill="#88888c" font-weight="normal" text-anchor="start" textLength="67.7" lengthAdjust="spacingAndGlyphs"  stroke="#88888c" stroke-width="0.05">Configura il sistema</text>
<text x="293.7" y="465.6" font-size="9.8" fill="#d4d4d6" font-weight="normal" text-anchor="start" textLength="133.6" lengthAdjust="spacingAndGlyphs"  stroke="#d4d4d6" stroke-width="0.1">Analizzatore di utilizzo del disco</text>
<text x="293.7" y="475.3" font-size="8.8" fill="#88888c" font-weight="normal" text-anchor="start" textLength="148.4" lengthAdjust="spacingAndGlyphs"  stroke="#88888c" stroke-width="0.05">Controlla la dimensione delle cartelle e lo…</text>
<text x="293.7" y="498.25" font-size="9.8" fill="#d4d4d6" font-weight="normal" text-anchor="start" textLength="51.6" lengthAdjust="spacingAndGlyphs"  stroke="#d4d4d6" stroke-width="0.1">Angoli attivi</text>
<text x="293.7" y="507.95" font-size="8.8" fill="#88888c" font-weight="normal" text-anchor="start" textLength="132.7" lengthAdjust="spacingAndGlyphs"  stroke="#88888c" stroke-width="0.05">Gestisci impostazioni degli angoli attivi</text>
<text x="293.7" y="530.9" font-size="9.8" fill="#d4d4d6" font-weight="normal" text-anchor="start" textLength="28.8" lengthAdjust="spacingAndGlyphs"  stroke="#d4d4d6" stroke-width="0.1">Applet</text>
<text x="293.7" y="540.6" font-size="8.8" fill="#88888c" font-weight="normal" text-anchor="start" textLength="98.3" lengthAdjust="spacingAndGlyphs"  stroke="#88888c" stroke-width="0.05">Gestione applet di Cinnamon</text>
<text x="293.7" y="563.55" font-size="9.8" fill="#d4d4d6" font-weight="normal" text-anchor="start" textLength="84.3" lengthAdjust="spacingAndGlyphs"  stroke="#d4d4d6" stroke-width="0.1">Applicazioni d’avvio</text>
<defs><linearGradient id="ic0" x1="0" y1="0" x2="0" y2="1"><stop offset="0" stop-color="#3f93f2"/><stop offset="1" stop-color="#2756cc"/></linearGradient></defs>
<defs><linearGradient id="ic1" x1="0" y1="0" x2="0" y2="1"><stop offset="0" stop-color="#5cc0f4"/><stop offset="1" stop-color="#2a76de"/></linearGradient></defs>
<defs><linearGradient id="ic3" x1="0" y1="0" x2="0" y2="1"><stop offset="0" stop-color="#5b8cea"/><stop offset="1" stop-color="#4d4fb8"/></linearGradient></defs>
<defs><linearGradient id="ic5" x1="0" y1="0" x2="0" y2="1"><stop offset="0" stop-color="#86cdf8"/><stop offset="1" stop-color="#4894e8"/></linearGradient></defs>
<defs><linearGradient id="ic6" x1="0" y1="0" x2="0" y2="1"><stop offset="0" stop-color="#62a6d4"/><stop offset="1" stop-color="#3a74a6"/></linearGradient></defs>
<defs><linearGradient id="ic4" x1="0" y1="0" x2="0" y2="1"><stop offset="0" stop-color="#fbb23a"/><stop offset="1" stop-color="#f3901e"/></linearGradient></defs>
<g transform="translate(268.5,325.8)"><rect width="20.5" height="20.7" rx="3.5" fill="url(#ic0)"/><circle cx="10.25" cy="4.4" r="1.9" fill="#fff"/><path d="M3.3 7.6 Q10.25 9.2 17.2 7.6 M10.25 8.8 V12.5 L7.3 18 M10.25 12.5 L13.2 18" fill="none" stroke="#fff" stroke-width="1.7" stroke-linecap="round" stroke-linejoin="round"/></g>
<g transform="translate(268.5,358.45)"><rect width="20.5" height="20.7" rx="3.5" fill="url(#ic1)"/><path d="M5 15.5 Q1.8 15.5 1.8 12.6 Q1.8 9.8 4.8 9.8 Q5.5 5.5 10 5.5 Q13.8 5.5 14.8 9 Q18.8 9 18.8 12.4 Q18.8 15.5 15.6 15.5 Z" fill="#f4f6f8"/></g>
<g transform="translate(268.5,391.1)"><rect width="20.5" height="20.7" rx="3.5" fill="#5c6e6e"/><rect y="12.3" width="20.5" height="1.8" fill="#a6dcd2"/><path d="M0 14.1 H20.5 V17.2 Q20.5 20.7 17 20.7 H3.5 Q0 20.7 0 17.2 Z" fill="#55585c"/></g>
<g transform="translate(268.5,423.75)"><rect width="20.5" height="20.7" rx="3.5" fill="url(#ic3)"/><circle cx="10.25" cy="10.35" r="5.2" fill="none" stroke="#fff" stroke-width="2.6" stroke-dasharray="2.3 1.8"/><circle cx="10.25" cy="10.35" r="4.3" fill="#fff"/><circle cx="10.25" cy="10.35" r="2.2" fill="#5568c8"/></g>
<g transform="translate(268.5,456.4)"><rect width="20.5" height="20.7" rx="3.5" fill="url(#ic4)"/><path d="M6.5 20.7 L9.5 9.5 L20.5 12 V17.2 Q20.5 20.7 17 20.7 Z" fill="#3d58d8"/><path d="M4.5 20.7 L9.5 9.5 L7.2 20.7 Z" fill="#e8403a"/></g>
<g transform="translate(268.5,489.05)"><rect width="20.5" height="20.7" rx="3.5" fill="url(#ic5)"/><path d="M0 5.5 V3.5 Q0 0 3.5 0 H5.5 Q3 3 0 5.5 Z" fill="#eef6fd"/><path d="M20.5 15.2 V17.2 Q20.5 20.7 17 20.7 H15 Q17.5 17.7 20.5 15.2 Z" fill="#eef6fd"/></g>
<g transform="translate(268.5,521.7)"><rect width="20.5" height="20.7" rx="3.5" fill="url(#ic6)"/><path d="M0 15 H20.5 V17.2 Q20.5 20.7 17 20.7 H3.5 Q0 20.7 0 17.2 Z" fill="#2e4a60"/><rect x="2.3" y="15.6" width="2.8" height="2.2" fill="#eef2f6"/><rect x="6.5" y="15.6" width="2.8" height="2.2" fill="#eef2f6"/><rect x="10.7" y="15.6" width="2.8" height="2.2" fill="#eef2f6"/><rect x="14.900000000000002" y="15.6" width="2.8" height="2.2" fill="#eef2f6"/></g>
<g transform="translate(268.5,554.35)"><rect width="20.5" height="20.7" rx="3.5" fill="#3a4a52"/></g>
<rect x="262" y="528" width="195" height="42" fill="url(#fade)"/><rect x="262" y="570" width="195" height="8" fill="#232327"/>
<rect x="456.8" y="325.3" width="3.2" height="22.5" rx="1.6" fill="#36363b"/>
<rect x="143.4" y="582" width="322" height="22" rx="2.5" fill="#333338" stroke="#3f7b9e" stroke-width="1"/>
<rect x="149.7" y="588.8" width="1.2" height="8.5" fill="#e8e8e8"/>
<circle cx="454.5" cy="591.8" r="2.9" fill="none" stroke="#e0e0e0" stroke-width="1.2"/><path d="M456.6 593.9 L458.5 595.8" stroke="#e0e0e0" stroke-width="1.3"/>
<rect x="0" y="611.3" width="1017" height="28.7" fill="#1d1d21"/>
<rect x="1017" y="611.3" width="7" height="28.7" fill="#2b2b2f"/>
<rect x="0" y="611.3" width="31" height="28.7" fill="#242428"/>
<rect x="31" y="611.3" width="7" height="28.7" fill="#19191c"/>
<rect x="38" y="611.3" width="33" height="28.7" fill="#25252a"/>
<rect x="43.4" y="637.5" width="27" height="2.5" fill="#2a9ad8"/>
<circle cx="15.6" cy="625.8" r="10.2" fill="none" stroke="#f4f4f4" stroke-width="2"/>
<path d="M10.3 620 V627.5 Q10.3 631.2 14 631.2 H17.5 Q21.2 631.2 21.2 627.5 V625 Q21.2 622.3 18.9 622.3 Q16.6 622.3 16.6 625 V628.8 M16.6 625 Q16.6 622.3 14.3 622.3 Q12.3 622.3 12.3 625 V628.8" fill="none" stroke="#f4f4f4" stroke-width="1.5"/>
<g transform="translate(47,615.5)"><path d="M0 1.2 Q0 0 1.2 0 H7.5 L9.5 2 H18.8 Q20 2 20 3.2 V6 H0 Z" fill="#e8ac55"/><rect x="0" y="4.5" width="20" height="13.6" rx="1" fill="#f8c471"/></g>
<defs><linearGradient id="ffg" x1="0" y1="0" x2="0" y2="1"><stop offset="0" stop-color="#f7833a"/><stop offset="1" stop-color="#f04468"/></linearGradient></defs>
<g transform="translate(78,614.8)"><rect width="20" height="20.2" rx="4" fill="url(#ffg)"/><path d="M6.2 5.5 A6.2 6.2 0 1 0 14.5 5.2" fill="none" stroke="#fff" stroke-width="3.4"/><path d="M11.2 3.2 Q14.5 3.8 15.6 7 L12.5 7.5 Z" fill="#fff"/><circle cx="10.3" cy="10.8" r="2.4" fill="#ee4a55"/></g>
<g transform="translate(109.7,615.1)"><rect width="19.3" height="19.9" rx="3.5" fill="#2a2a2b" stroke="#3c3c3e" stroke-width="0.5"/><text x="2.0" y="8.2" font-size="8" font-weight="bold" fill="#e8e8e8" font-family="Liberation Mono">$</text><rect x="7.2" y="7.3" width="4.6" height="1.3" fill="#e8e8e8"/></g>
<rect x="888.3" y="618.5" width="2.2" height="14.3" rx="1.1" fill="#6aa8b8"/>
<rect x="893.6" y="618.5" width="2.2" height="14.3" rx="1.1" fill="#df9148"/>
<rect x="898.8" y="618.5" width="2.2" height="14.3" rx="1.1" fill="#6aa8b8"/>
<rect x="895.5" y="623" width="1" height="1" fill="#1d1d21"/>
<rect x="911.2" y="621.3" width="9.5" height="9.8" rx="1.2" fill="none" stroke="#e8e8e8" stroke-width="1.3"/><rect x="914" y="620" width="4" height="2" fill="#e8e8e8"/><path d="M916 624 V627.3 M916 628.6 V629.7" stroke="#e8e8e8" stroke-width="1.2"/>
<path d="M934.5 620.5 L929.5 622.3 V626 Q929.5 630 934.5 632 Q939.5 630 939.5 626 V622.3 Z" fill="none" stroke="#e8e8e8" stroke-width="1.2"/><path d="M934.5 621.8 V630.5 Q931 629 931 626 V623.2 Z" fill="#e8e8e8"/><circle cx="938.8" cy="630" r="2.2" fill="#e8805a"/>
<rect x="952.8" y="620.3" width="4" height="3.5" fill="#e8e8e8"/><rect x="948.8" y="628.3" width="4" height="3.5" fill="#e8e8e8"/><rect x="957" y="628.3" width="4" height="3.5" fill="#e8e8e8"/><path d="M954.8 623.8 V626.2 M950.8 628.3 V626.2 H959 V628.3" fill="none" stroke="#e8e8e8" stroke-width="1"/>
<path d="M969.5 624 H972 L975.5 620.8 V631.2 L972 628 H969.5 Z" fill="#e8e8e8"/><path d="M977 623.3 Q978.5 626 977 628.7 M979 621.8 Q981.3 626 979 630.2" fill="none" stroke="#c8c8c8" stroke-width="0.9"/>
<text x="989" y="629.2" font-size="9.2" fill="#e8e8e8" font-weight="bold" text-anchor="start" textLength="23.4" lengthAdjust="spacingAndGlyphs" >21.52</text>
</svg></body></html>
